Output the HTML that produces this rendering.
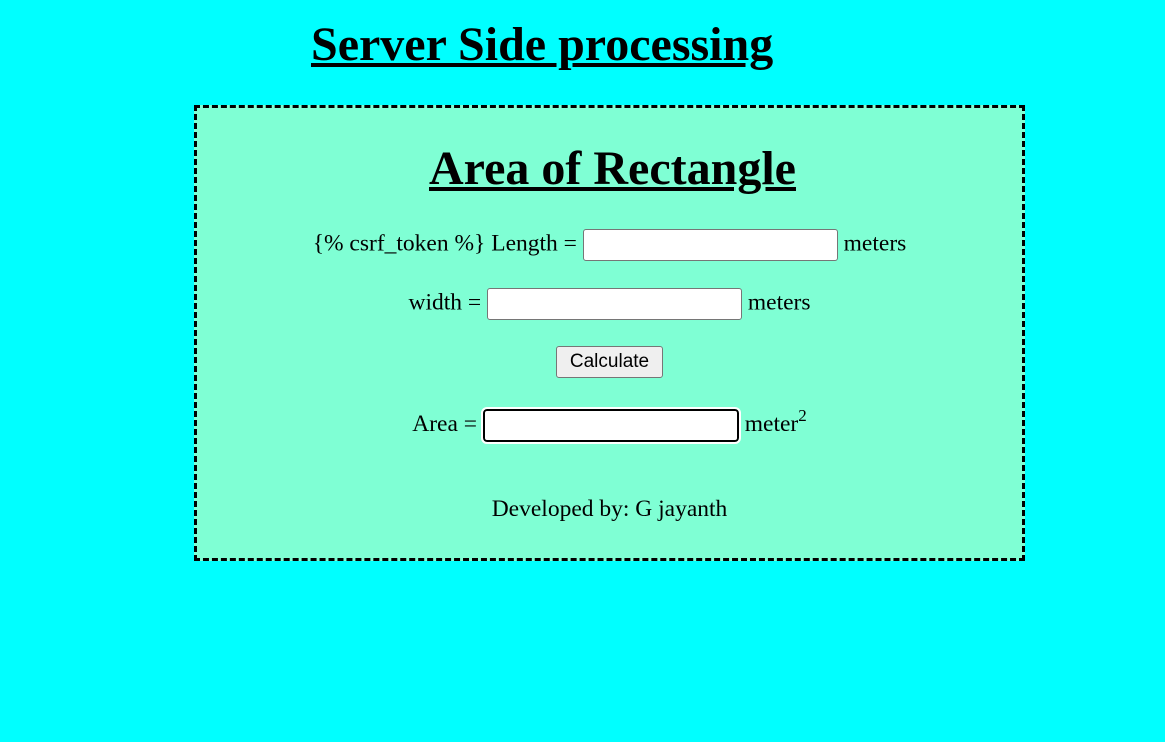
<!DOCTYPE html>
<html><head><style>
html,body{margin:0;padding:0;background:#00ffff;width:1165px;height:742px;overflow:hidden;font-family:"Liberation Serif",serif;color:#000}
.t{position:absolute;white-space:nowrap;font-weight:bold;text-decoration:underline;font-size:48px;line-height:1}
.box{position:absolute;left:194px;top:105px;width:825px;height:450px;border:3px dashed #000;background:#7fffd4}
.row{position:absolute;left:0;width:100%;text-align:center;font-size:23.5px;white-space:nowrap}
.in{display:inline-block;vertical-align:middle;width:253px;height:30px;border:1px solid #767676;border-radius:3px;background:#fff}
.foc{width:252px;height:29px;border:2px solid #000;border-radius:4px;outline:2px solid #fff}
.btn{display:inline-block;width:105px;height:30px;border:1px solid #767676;border-radius:3px;background:#efefef;font-family:"Liberation Sans",sans-serif;font-size:19px;line-height:30px;text-align:center}
sup{font-size:17px;vertical-align:0;position:relative;top:-10px}
</style></head><body>
<div class="t" style="left:311px;top:21px">Server Side processing</div>
<div class="box">
<div class="t" style="left:232px;top:37px">Area of Rectangle</div>
<div class="row" style="top:121px">{% csrf_token %} Length = <span class="in"></span> meters</div>
<div class="row" style="top:180px">width = <span class="in"></span> meters</div>
<div class="row" style="top:238px"><span class="btn">Calculate</span></div>
<div class="row" style="top:301px">Area = <span class="in foc"></span> meter<sup>2</sup></div>
<div class="row" style="top:388px">Developed by: G jayanth</div>
</div>
</body></html>
